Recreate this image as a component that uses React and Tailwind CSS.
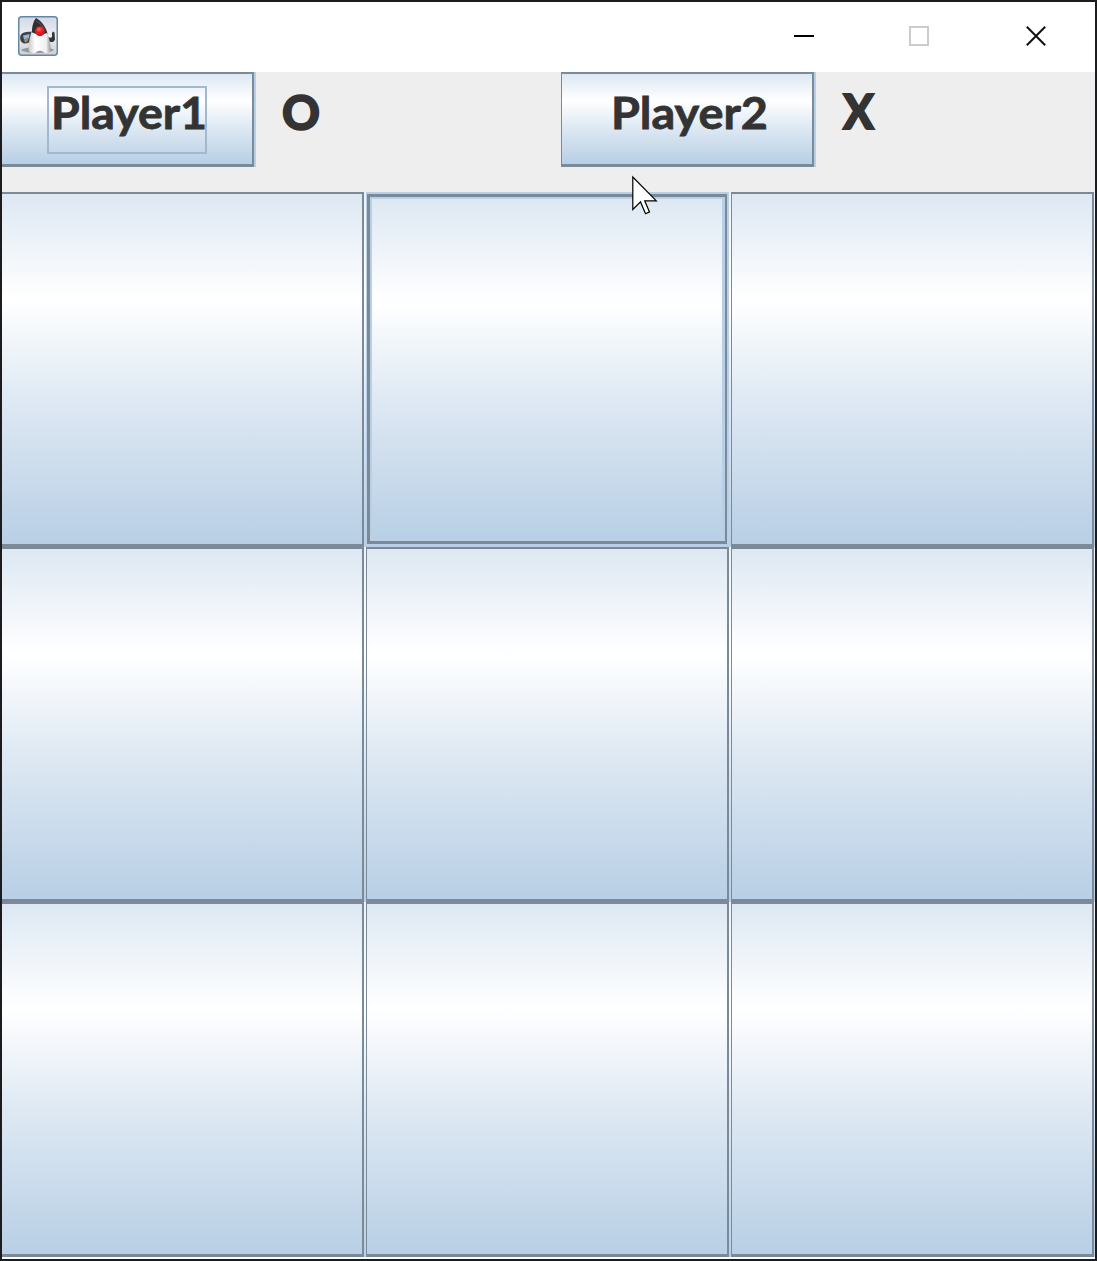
import React from 'react';

const METAL =
  'bg-[linear-gradient(to_bottom,#dde8f3_0%,#ffffff_30%,#dde8f3_60%,#b8cfe5_100%)]';

function DukeIcon() {
  return (
    <svg width="40" height="40" viewBox="0 0 40 40">
      <defs>
        <linearGradient id="tile" x1="0" y1="0" x2="0" y2="1">
          <stop offset="0" stopColor="#d3d8e6" />
          <stop offset="0.5" stopColor="#eeeef4" />
          <stop offset="1" stopColor="#cdced4" />
        </linearGradient>
        <linearGradient id="body" x1="0" y1="0" x2="1" y2="0">
          <stop offset="0" stopColor="#c9c9c9" />
          <stop offset="0.3" stopColor="#ffffff" />
          <stop offset="0.8" stopColor="#f0f0f0" />
          <stop offset="1" stopColor="#999999" />
        </linearGradient>
        <radialGradient id="nose" cx="0.4" cy="0.3" r="0.7">
          <stop offset="0" stopColor="#ff6a61" />
          <stop offset="0.45" stopColor="#e3202a" />
          <stop offset="1" stopColor="#c4141e" />
        </radialGradient>
      </defs>
      <rect x="0.75" y="0.75" width="38.5" height="38.5" rx="3" fill="url(#tile)" stroke="#6288a5" strokeWidth="1.5" />
      <path d="M3 34c5-4 29-4 33 0c-5 4-28 4-33 0Z" fill="#96989d" />
      <path d="M15 16C10 15.500 4 16 2.500 19.500c-1 3.500 0 7 3.500 8c3 .5 6-1 8-4Z" fill="#404044" />
      <path d="M5 19.500l6.500-1.500l-.5 4l-5 1.500Z" fill="#8bb9e0" />
      <path d="M6 23.500l5-1.500l-2 4l-2 .5Z" fill="#a78b56" />
      <path d="M29 20c2 2 4 2 5 1v-4l1-1.500l1.500 1l.5 7c-1 3-4 3.500-7 1Z" fill="#343437" />
      <path d="M18 2C22 4 28 10 29.500 18c-3 4-12 4-15.500 0C13.500 12 15 6 18 2Z" fill="#303033" />
      <path d="M18 5c3 1.500 6 4 8 8" stroke="#505054" strokeWidth="1.200" fill="none" />
      <path d="M13.500 16c4 3 12 3 15.500 1c2.500 5 4 13 3.500 17.500c-1 3.500-5.500 3.500-7.500 1c-2-1-4-1-6 0c-2 2.500-7 2-8-.5c-1-5 .5-13 2.500-19Z" fill="url(#body)" />
      <circle cx="22" cy="15.300" r="4.900" fill="url(#nose)" />
    </svg>
  );
}

function TitleBar() {
  return (
    <header className="flex h-[70px] shrink-0 items-start justify-between bg-white">
      <div className="pl-4 pt-3.5">
        <DukeIcon />
      </div>
      <div className="flex gap-[95px] pr-[49px] pt-[24px]">
        <svg width="20" height="20" viewBox="0 0 20 20">
          <path d="M0 10h20" stroke="#000" strokeWidth="2" />
        </svg>
        <svg width="20" height="20" viewBox="0 0 20 20">
          <rect x="1" y="1" width="18" height="18" fill="none" stroke="#cccccc" strokeWidth="2" />
        </svg>
        <svg width="20" height="20" viewBox="0 0 20 20" className="ml-[2px]">
          <path d="M.8.8l18.4 18.4M19.2.8L.8 19.2" stroke="#111" strokeWidth="2" />
        </svg>
      </div>
    </header>
  );
}

function Label({ x, y, size, width, stroke, weight, children }) {
  return (
    <text
      x={x}
      y={y}
      fontSize={size}
      fontWeight={weight}
      fill="#333"
      stroke="#333"
      strokeWidth={stroke}
      textLength={width}
      lengthAdjust="spacingAndGlyphs"
    >
      {children}
    </text>
  );
}

function ScoreBar() {
  return (
    <section className="grid h-[120px] shrink-0 grid-cols-[254px_305px_255px_1fr] bg-[#eeeeee] font-['Lato',sans-serif] text-[#333333]">
      <button className="h-[95px] border-r-2 border-[#b8cfe5] text-left">
        <span className={`flex h-full border-t-2 border-r-2 border-b-3 border-[#7a8a99] pl-[45px] pt-[12px] ${METAL}`}>
          <span className="h-[68px] w-[160px] border-2 border-[#a3b8cc] pl-[1px] pt-[2px]">
            <svg width="158" height="60" className="overflow-visible">
              <Label x={1} y={38.5} size={44.5} width={156} stroke={0.8} weight={700}>Player1</Label>
            </svg>
          </span>
        </span>
      </button>
      <div className="pl-[24px]">
        <svg width="60" height="90">
          <Label x={2} y={57.5} size={48} width={38} stroke={1.6} weight={900}>O</Label>
        </svg>
      </div>
      <button className="h-[95px] border-r-2 border-[#b8cfe5] text-left">
        <span className={`flex h-full border-t-2 border-r-2 border-b-3 border-l border-[#7a8a99] pl-[47px] pt-[16px] ${METAL}`}>
          <svg width="162" height="60" className="overflow-visible">
            <Label x={2} y={38.5} size={44.5} width={157} stroke={0.8} weight={700}>Player2</Label>
          </svg>
        </span>
      </button>
      <div className="pl-[24px]">
        <svg width="60" height="90">
          <Label x={3} y={57} size={47.5} width={31} stroke={1.8} weight={900}>X</Label>
        </svg>
      </div>
    </section>
  );
}

function Cell({ first, focused }) {
  if (focused) {
    return (
      <button className="border-t-2 border-r-2 border-b-3 border-l border-[#b8cfe5]">
        <span className="block h-full border-t-3 border-r-2 border-b-3 border-l-3 border-[#7a8a99]">
          <span className={`block h-full border-t-2 border-r-3 border-l-2 border-[#b8cfe5] ${METAL}`} />
        </span>
      </button>
    );
  }
  return (
    <button
      className={`border-t-2 border-r-2 border-b-3 border-[#7a8a99] ${first ? '' : 'border-l'} ${METAL}`}
    />
  );
}

export default function App() {
  return (
    <main className="relative flex h-[1261px] w-[1097px] flex-col border-2 border-[#1c1c1e] bg-white">
      <TitleBar />
      <ScoreBar />
      <section className="flex flex-col">
        {[0, 1, 2].map((row) => (
          <div
            key={row}
            className="grid h-[355px] grid-cols-[362px_363px_363px] gap-x-0.5 bg-[linear-gradient(to_bottom,#eef3f9_0%,#ffffff_30%,#dde8f3_60%,#b8cfe5_100%)]"
          >
            {[0, 1, 2].map((col) => (
              <Cell key={col} first={col === 0} focused={row === 0 && col === 1} />
            ))}
          </div>
        ))}
      </section>
      <svg
        className="absolute left-[630px] top-[173px]"
        width="28"
        height="42"
        viewBox="0 0 28 42"
      >
        <path d="M.8 2v32.5l7.7-7.6 5 11.800 4-1.800-4.800-11.100h11.600Z" fill="#fff" stroke="#000" strokeWidth="1.2" />
      </svg>
    </main>
  );
}
